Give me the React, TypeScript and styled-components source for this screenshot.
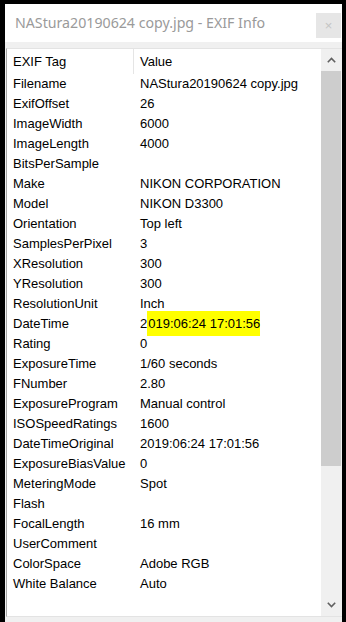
import React from "react";
import styled, { createGlobalStyle } from "styled-components";

const GlobalStyle = createGlobalStyle`
  html, body {
    margin: 0;
    padding: 0;
    background: #000;
  }
`;

const Frame = styled.div`
  width: 346px;
  height: 622px;
  box-sizing: border-box;
  padding: 4px 4px 0 5px;
  background: #000;
`;

const Window = styled.div`
  height: 618px;
  display: flex;
  flex-direction: column;
  background: #f0f0f0;
`;

const TitleBar = styled.div`
  height: 38px;
  flex: none;
  display: flex;
  align-items: center;
  justify-content: space-between;
  background: #fff;
  padding-left: 10px;
`;

const Title = styled.span`
  font-family: "Noto Sans", "Open Sans", sans-serif;
  font-size: 14.2px;
  color: #9a9a9a;
  margin-top: -2px;
`;

const CloseButton = styled.div`
  width: 25px;
  height: 25px;
  align-self: flex-end;
  margin: 0 1px 4px 0;
  background: #e6e6e6;
  color: #c4c4c4;
  font-family: "Liberation Sans", sans-serif;
  font-size: 13px;
  display: flex;
  align-items: center;
  justify-content: center;
`;

const ListBox = styled.div`
  margin: 6px 0 5px 1px;
  flex: 1;
  display: flex;
  background: #fff;
  border-left: 1px solid #a6a6a6;
  border-top: 1px solid #e3e3e3;
  border-bottom: 1px solid #e3e3e3;
  overflow: hidden;
`;

const Table = styled.div`
  flex: 1;
  font-family: "Liberation Sans", Arial, sans-serif;
  font-size: 13px;
  color: #000;
`;

const Row = styled.div<{ $header?: boolean }>`
  display: grid;
  grid-template-columns: 127px 1fr;
  height: ${(p) => (p.$header ? 25 : 20)}px;
  line-height: ${(p) => (p.$header ? 25 : 20)}px;
`;

const Cell = styled.div<{ $divider?: boolean }>`
  padding-left: 6px;
  white-space: nowrap;
  border-right: ${(p) => (p.$divider ? "1px solid #e5e5e5" : "none")};
`;

const Mark = styled.span`
  background: #ffff00;
  padding: 5px 0 5px 1px;
`;

const ScrollBar = styled.div`
  width: 21px;
  flex: none;
  display: flex;
  flex-direction: column;
  background: #f0f0f0;
`;

const Arrow = styled.div`
  height: 22px;
  display: flex;
  align-items: center;
  justify-content: center;
`;

const Thumb = styled.div`
  height: 395px;
  margin-right: 1px;
  background: #cdcdcd;
`;

const Track = styled.div`
  flex: 1;
`;

const Chevron: React.FC<{ up?: boolean }> = ({ up }) => (
  <svg width="9" height="6" viewBox="0 0 9 6">
    <path
      d={up ? "M0.8 5.2 L4.5 1.5 L8.2 5.2" : "M0.8 0.8 L4.5 4.5 L8.2 0.8"}
      fill="none"
      stroke="#606060"
      strokeWidth="1.6"
    />
  </svg>
);

const rows: [string, React.ReactNode][] = [
  ["Filename", "NAStura20190624 copy.jpg"],
  ["ExifOffset", "26"],
  ["ImageWidth", "6000"],
  ["ImageLength", "4000"],
  ["BitsPerSample", ""],
  ["Make", "NIKON CORPORATION"],
  ["Model", "NIKON D3300"],
  ["Orientation", "Top left"],
  ["SamplesPerPixel", "3"],
  ["XResolution", "300"],
  ["YResolution", "300"],
  ["ResolutionUnit", "Inch"],
  [
    "DateTime",
    <>
      2<Mark>019:06:24 17:01:56</Mark>
    </>,
  ],
  ["Rating", "0"],
  ["ExposureTime", "1/60 seconds"],
  ["FNumber", "2.80"],
  ["ExposureProgram", "Manual control"],
  ["ISOSpeedRatings", "1600"],
  ["DateTimeOriginal", "2019:06:24 17:01:56"],
  ["ExposureBiasValue", "0"],
  ["MeteringMode", "Spot"],
  ["Flash", ""],
  ["FocalLength", "16 mm"],
  ["UserComment", ""],
  ["ColorSpace", "Adobe RGB"],
  ["White Balance", "Auto"],
];

export default function App() {
  return (
    <Frame>
      <GlobalStyle />
      <Window>
        <TitleBar>
          <Title>NAStura20190624 copy.jpg - EXIF Info</Title>
          <CloseButton>×</CloseButton>
        </TitleBar>
        <ListBox>
          <Table>
            <Row $header>
              <Cell $divider>EXIF Tag</Cell>
              <Cell>Value</Cell>
            </Row>
            {rows.map(([tag, value]) => (
              <Row key={tag}>
                <Cell>{tag}</Cell>
                <Cell>{value}</Cell>
              </Row>
            ))}
          </Table>
          <ScrollBar>
            <Arrow>
              <Chevron up />
            </Arrow>
            <Thumb />
            <Track />
            <Arrow>
              <Chevron />
            </Arrow>
          </ScrollBar>
        </ListBox>
      </Window>
    </Frame>
  );
}
